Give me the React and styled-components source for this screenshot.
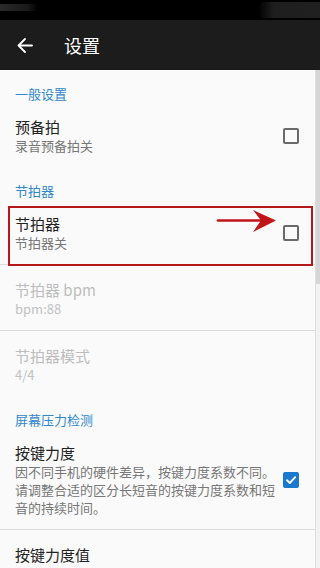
import React from "react";
import styled, { createGlobalStyle, css } from "styled-components";

const Global = createGlobalStyle`
  html, body { margin: 0; padding: 0; background: #fafafa; }
  body { font-family: "Noto Sans CJK SC", "Noto Sans", Roboto, sans-serif; }
  * { box-sizing: border-box; }
`;

const Screen = styled.div`
  width: 320px;
  height: 568px;
  overflow: hidden;
  display: flex;
  flex-direction: column;
  background: #fafafa;
`;

const StatusBar = styled.div`
  height: 20px;
  background: #000;
  display: flex;
  justify-content: space-between;
  align-items: flex-start;
  flex-shrink: 0;
`;

const BlurLeft = styled.div`
  width: 38px;
  height: 7px;
  margin-top: 4px;
  border-radius: 0 6px 6px 0;
  background: linear-gradient(90deg, #2a2a2a, #1a1a1a 70%, rgba(0,0,0,0));
`;

const BlurRight = styled.div`
  width: 62px;
  height: 16px;
  margin-top: 2px;
  border-radius: 6px 0 0 6px;
  background: linear-gradient(90deg, rgba(30,30,30,0), #1e1e1e 25%, #202020);
`;

const AppBar = styled.div`
  height: 50px;
  background: #1c1c1c;
  display: flex;
  align-items: center;
  flex-shrink: 0;
  padding-left: 16px;
`;

const BackButton = styled.div`
  width: 18px;
  height: 18px;
  display: flex;
  align-items: center;
  justify-content: center;
  margin-right: 30px;
`;

const Title = styled.div`
  color: #fff;
  font-size: 18px;
  line-height: 24px;
`;

const Body = styled.div`
  flex: 1;
  display: flex;
  min-height: 0;
`;

const List = styled.div`
  flex: 1;
  display: flex;
  flex-direction: column;
  background: #fafafa;
  border-right: 1px solid #dedede;
`;

const Track = styled.div`
  width: 4px;
  background: #f2f2f2;
  display: flex;
  flex-direction: column;
`;

const Thumb = styled.div`
  height: 214px;
  background: #d6d6d6;
`;

const Category = styled.div`
  padding: 16px 15px 0;
  line-height: 16px;
  height: 32px;
  font-size: 13px;
  color: #2f88cc;
`;

const Row = styled.div`
  position: relative;
  display: flex;
  align-items: center;
  padding: 15px 16px 12px 15px;
  flex-shrink: 0;
  ${(p) =>
    p.$divider &&
    css`
      border-bottom: 1px solid #dcdcdc;
    `}
  ${(p) =>
    p.$highlight &&
    css`
      &::after {
        content: "";
        position: absolute;
        top: 7px;
        bottom: -2px;
        left: 8px;
        right: 2px;
        border: 2px solid #b5171b;
        pointer-events: none;
      }
    `}
`;

const TextBlock = styled.div`
  flex: 1;
  min-width: 0;
`;

const ItemTitle = styled.div`
  font-size: 15px;
  line-height: 20px;
  color: ${(p) => (p.$disabled ? "#bdbdbd" : "#222")};
`;

const Summary = styled.div`
  font-size: 13px;
  line-height: 18px;
  color: ${(p) => (p.$disabled ? "#c2c2c2" : "#777")};
  white-space: nowrap;
`;

const Box = styled.div`
  width: 16px;
  height: 16px;
  margin-left: 4px;
  flex-shrink: 0;
  border-radius: 2px;
  display: flex;
  align-items: center;
  justify-content: center;
  ${(p) =>
    p.$checked
      ? css`
          background: #1b78cf;
        `
      : css`
          border: 2px solid #6a6a6a;
        `}
`;

const Arrow = styled.svg`
  position: absolute;
  left: 216px;
  top: 9px;
  pointer-events: none;
`;

function Checkbox({ checked }) {
  return (
    <Box $checked={checked}>
      {checked && (
        <svg width="12" height="12" viewBox="0 0 12 12">
          <path d="M2 6.2 L4.8 9 L10.2 3.2" fill="none" stroke="#fff" strokeWidth="1.9" strokeLinecap="round" strokeLinejoin="round" />
        </svg>
      )}
    </Box>
  );
}

function Pref({ title, summary, checkbox, checked, disabled, divider, highlight, children }) {
  return (
    <Row $divider={divider} $highlight={highlight}>
      <TextBlock>
        <ItemTitle $disabled={disabled}>{title}</ItemTitle>
        <Summary $disabled={disabled}>{summary}</Summary>
      </TextBlock>
      {checkbox && <Checkbox checked={checked} />}
      {children}
    </Row>
  );
}

export default function App() {
  return (
    <>
      <Global />
      <Screen>
        <StatusBar>
          <BlurLeft />
          <BlurRight />
        </StatusBar>
        <AppBar>
          <BackButton>
            <svg width="16" height="15" viewBox="0 0 16 15">
              <path d="M1.5 7.5 H15 M8 1 L1.5 7.5 L8 14" fill="none" stroke="#fff" strokeWidth="1.8" strokeLinecap="round" strokeLinejoin="round" />
            </svg>
          </BackButton>
          <Title>设置</Title>
        </AppBar>
        <Body>
          <List>
            <Category>一般设置</Category>
            <Pref title="预备拍" summary="录音预备拍关" checkbox />
            <Category>节拍器</Category>
            <Pref title="节拍器" summary="节拍器关" checkbox divider highlight>
              <Arrow width="64" height="26" viewBox="0 0 64 26">
                <path d="M2 12.5 L46 12.5" stroke="#c0161a" strokeWidth="2.6" strokeLinecap="round" />
                <path d="M37 2 L60 12.5 L37 24 L45 12.5 Z" fill="#c0161a" />
              </Arrow>
            </Pref>
            <Pref title="节拍器 bpm" summary="bpm:88" disabled divider />
            <Pref title="节拍器模式" summary="4/4" disabled />
            <Category>屏幕压力检测</Category>
            <Pref
              title="按键力度"
              summary={
                <>
                  因不同手机的硬件差异，按键力度系数不同。
                  <br />
                  请调整合适的区分长短音的按键力度系数和短
                  <br />
                  音的持续时间。
                </>
              }
              checkbox
              checked
              divider
            />
            <Pref title="按键力度值" summary="按键力度值" />
          </List>
          <Track>
            <Thumb />
          </Track>
        </Body>
      </Screen>
    </>
  );
}
